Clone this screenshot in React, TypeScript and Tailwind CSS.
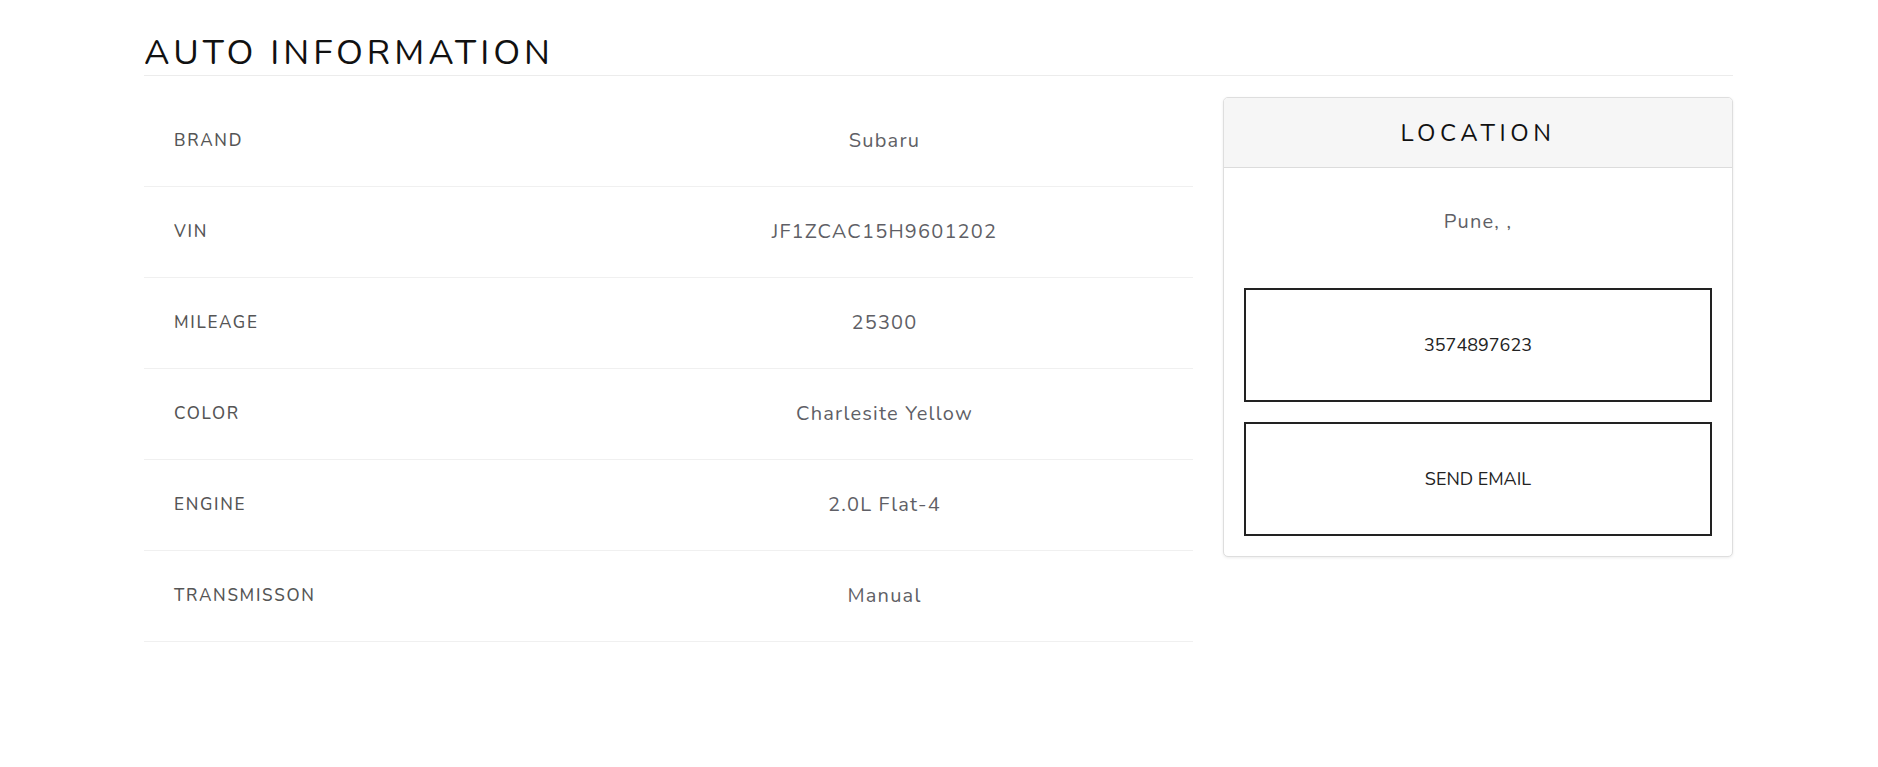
import React from 'react';

const specs = [
    { label: 'Brand', value: 'Subaru' },
    { label: 'VIN', value: 'JF1ZCAC15H9601202' },
    { label: 'Mileage', value: '25300' },
    { label: 'Color', value: 'Charlesite Yellow' },
    { label: 'Engine', value: '2.0L Flat-4' },
    { label: 'Transmisson', value: 'Manual' },
];

const SpecRow: React.FC<{ label: string; value: string }> = ({ label, value }) => (
    <div className="grid h-[91px] grid-cols-[432px_1fr] items-center border-b border-[#f0f0f0]">
        <div className="pl-[30px] text-[17px] font-medium uppercase tracking-[0.1em] text-[#555]">
            {label}
        </div>
        <div className="text-center text-[20px] tracking-[0.06em] text-[#5f5f66]">{value}</div>
    </div>
);

export default function App() {
    return (
        <div className="min-h-screen bg-white font-['Nunito','Lato',sans-serif]">
            <div className="ml-[144px] w-[1589px] pt-[32px]">
                {/* Titre */}
                <h2 className="border-b border-[#ececec] pb-[1px] text-[35px] leading-[42px] tracking-[0.115em] text-[#111]">
                    AUTO INFORMATION
                </h2>

                <div className="mt-[20px] flex gap-[30px]">
                    <div className="w-[1049px]">
                        {specs.map((s) => (
                            <SpecRow key={s.label} label={s.label} value={s.value} />
                        ))}
                    </div>

                    <div className="mt-[1px] h-fit w-[510px] overflow-hidden rounded-[5px] border border-[#dedede] bg-white shadow-[0_1px_3px_rgba(0,0,0,0.08)]">
                        <div className="flex h-[70px] items-center justify-center border-b border-[#dcdcdc] bg-[#f6f6f6]">
                            <span className="text-[24px] tracking-[0.19em] text-[#111]">LOCATION</span>
                        </div>
                        <div className="px-[20px] pb-[20px] pt-[40px]">
                            <p className="text-center text-[20px] leading-[28px] tracking-[0.06em] text-[#5f5f66]">
                                Pune, ,
                            </p>
                            <div className="mt-[52px] flex flex-col gap-[20px]">
                                <button className="flex h-[114px] w-full items-center justify-center border-2 border-[#222] text-[18px] text-[#222]">
                                    3574897623
                                </button>
                                <button className="flex h-[114px] w-full items-center justify-center border-2 border-[#222] text-[18px] text-[#222]">
                                    SEND EMAIL
                                </button>
                            </div>
                        </div>
                    </div>
                </div>
            </div>
        </div>
    );
}
